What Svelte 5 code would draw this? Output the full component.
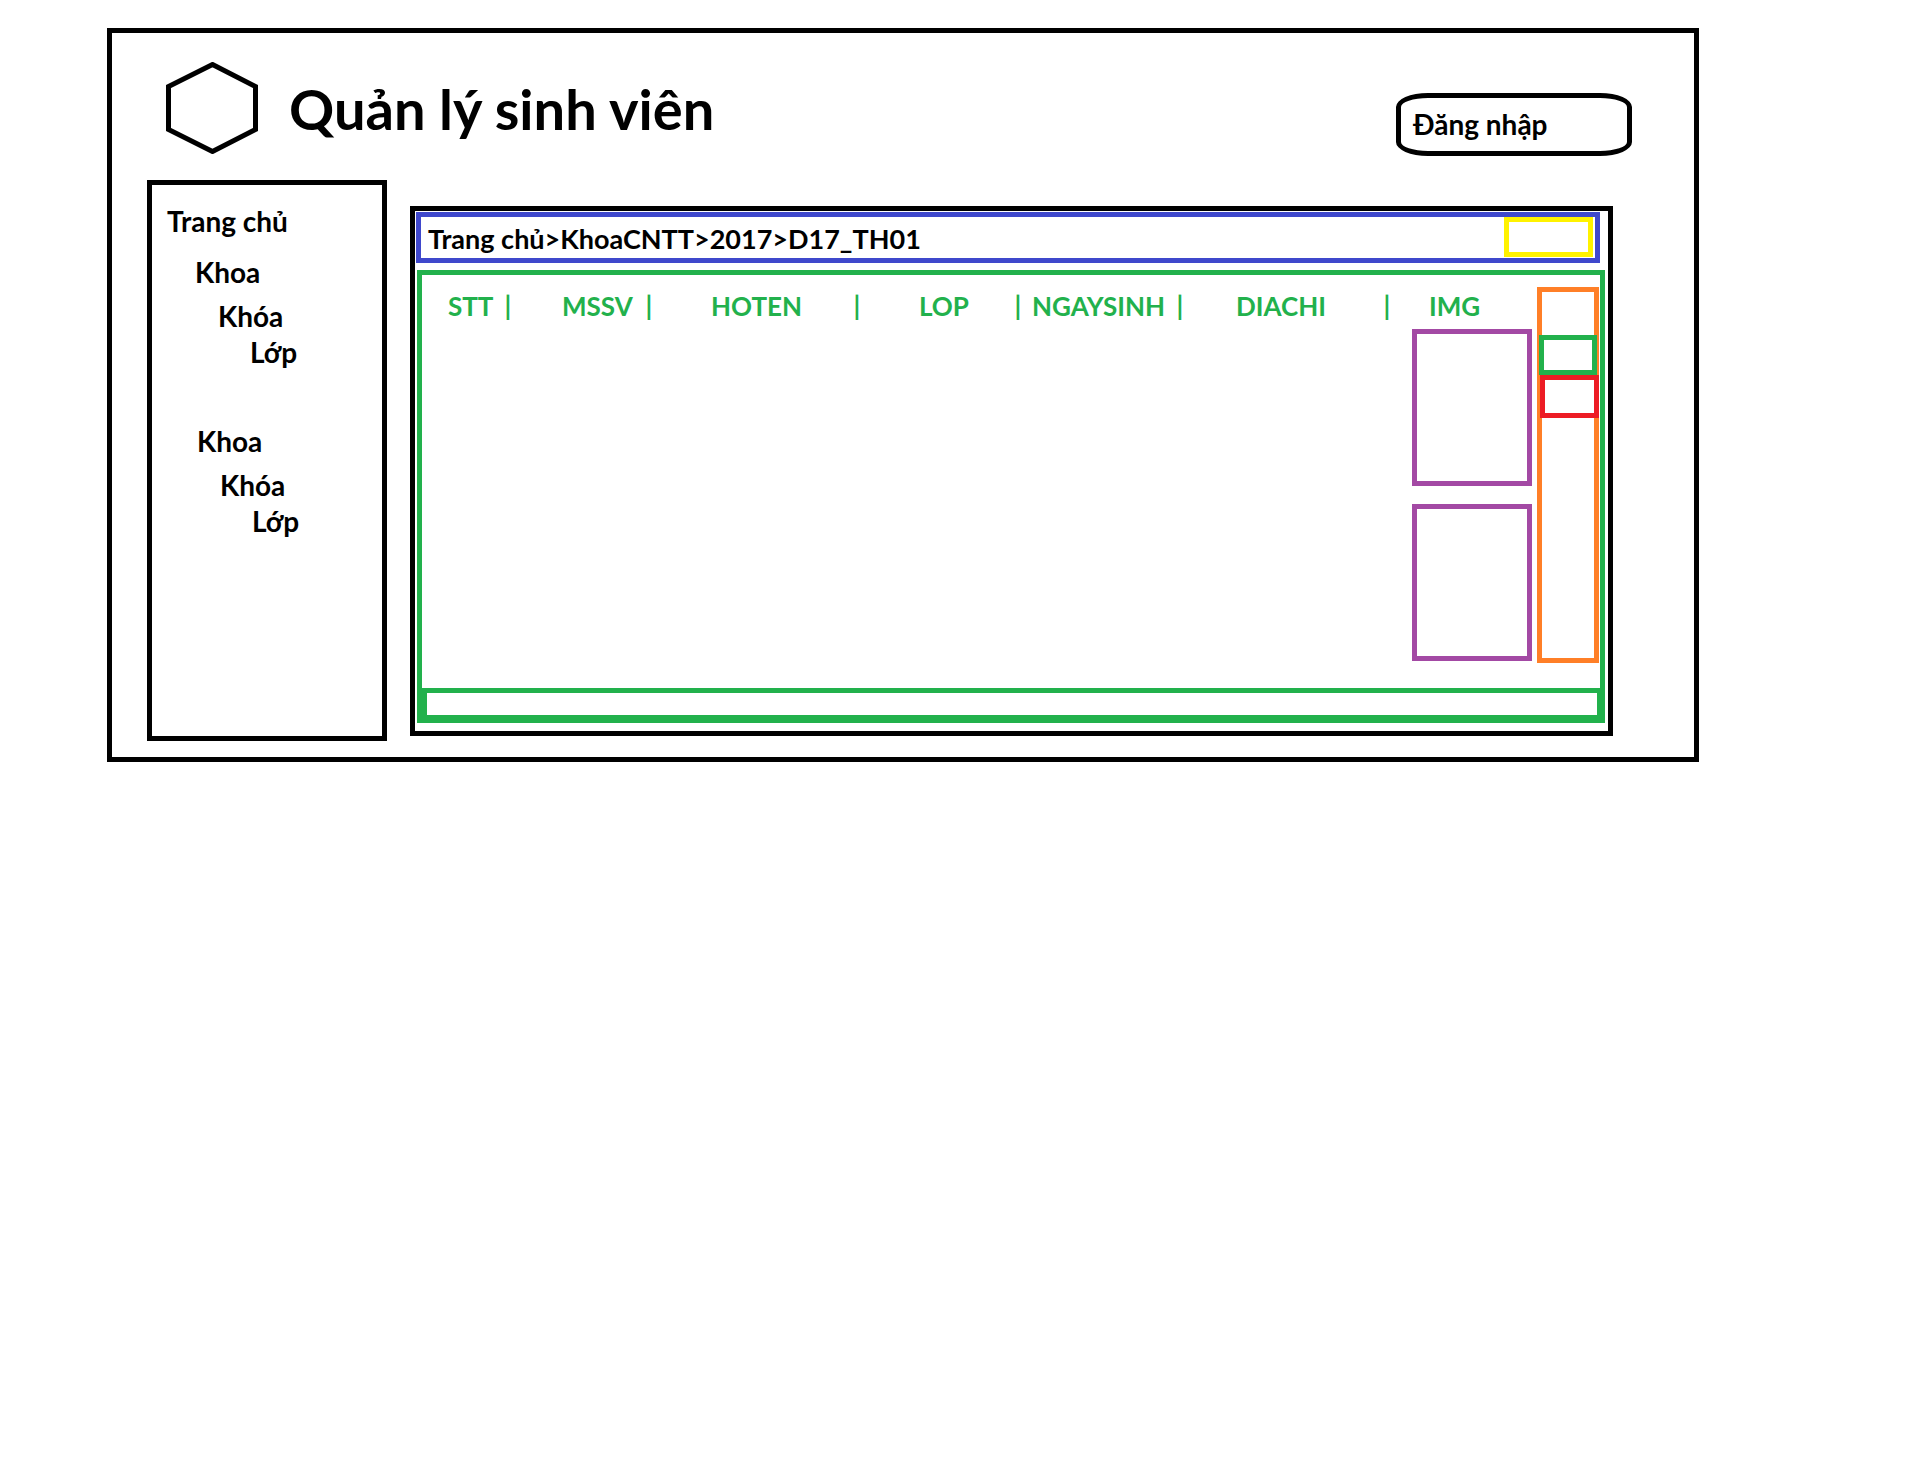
<script>
  const groups = [
    { faculty: 'Khoa', year: 'Khóa', className: 'Lớp' },
    { faculty: 'Khoa', year: 'Khóa', className: 'Lớp' }
  ];
  const crumbs = ['Trang chủ', 'KhoaCNTT', '2017', 'D17_TH01'];
  const columns = ['STT', 'MSSV', 'HOTEN', 'LOP', 'NGAYSINH', 'DIACHI', 'IMG'];
  const students = [1, 2];
</script>

<div class="page">
  <header>
    <svg class="logo" width="92" height="92" viewBox="0 0 92 92" aria-hidden="true">
      <path d="M46.5 2.5 89.5 24.5V67.5L46.5 89.5 2.5 67.5V24.5Z" />
    </svg>
    <h1>Quản lý sinh viên</h1>
    <button class="login" type="button">Đăng nhập</button>
  </header>

  <div class="body">
    <nav class="sidebar" aria-label="Danh mục">
      <a href="#home">Trang chủ</a>
      {#each groups as group}
        <ul class="faculty">
          <li>
            <a href="#faculty">{group.faculty}</a>
            <ul class="year">
              <li>
                <a href="#year">{group.year}</a>
                <ul class="class">
                  <li><a href="#class">{group.className}</a></li>
                </ul>
              </li>
            </ul>
          </li>
        </ul>
      {/each}
    </nav>

    <main>
      <div class="toolbar">
        <nav class="crumbs" aria-label="Đường dẫn">
          {#each crumbs as crumb, i}{#if i > 0}<span>&gt;</span>{/if}<a href="#path">{crumb}</a>{/each}
        </nav>
        <button class="add" type="button" aria-label="Thêm"></button>
      </div>

      <section class="list">
        <div class="records">
          <table>
            <thead>
              <tr>
                {#each columns as column, i}
                  <th class={column.toLowerCase()} scope="col">
                    <div class="head">
                      <span>{column}</span>
                      {#if i < columns.length - 1}<span class="bar">|</span>{/if}
                    </div>
                  </th>
                {/each}
              </tr>
            </thead>
            <tbody>
              {#each students as student (student)}
                <tr>
                  <td colspan="6"></td>
                  <td class="photo-cell"><div class="photo"></div></td>
                </tr>
              {/each}
            </tbody>
          </table>
          <div class="actions">
            <button class="edit" type="button" aria-label="Sửa"></button>
            <button class="delete" type="button" aria-label="Xóa"></button>
          </div>
        </div>
        <div class="pager"></div>
      </section>
    </main>
  </div>
</div>

<style>
  :global(body) {
    background: #fff;
  }
  .page, .page * {
    box-sizing: border-box;
  }
  .page {
    margin: 28px 223px 0 107px;
    border: 5px solid #000;
    color: #000;
    font: bold 28px/36px Lato, "Open Sans", sans-serif;
  }
  a {
    color: inherit;
    text-decoration: none;
  }
  button {
    padding: 0;
    background: #fff;
    color: inherit;
    font: inherit;
    text-align: left;
  }
  ul {
    margin: 0;
    padding: 0;
    list-style: none;
  }

  header {
    display: flex;
    align-items: flex-start;
    min-height: 147px;
    padding: 29px 62px 0 54px;
  }
  .logo {
    flex: none;
    fill: none;
    stroke: #000;
    stroke-width: 5;
  }
  h1 {
    margin: 17px 0 0 31px;
    font-size: 56px;
    line-height: 60px;
  }
  .login {
    width: 236px;
    margin: 31px 0 0 auto;
    padding: 8px 12px 9px;
    border: 5px solid #000;
    border-radius: 32px / 14px;
  }

  .body {
    display: flex;
    gap: 23px;
    padding: 0 81px 16px 35px;
  }
  .sidebar {
    flex: none;
    width: 240px;
    padding: 18px 15px;
    border: 5px solid #000;
  }
  .sidebar a {
    display: block;
  }
  .faculty {
    margin-top: 15px;
    padding-left: 28px;
  }
  .faculty + .faculty {
    margin-top: 53px;
    padding-left: 30px;
  }
  .year {
    margin-top: 8px;
    padding-left: 23px;
  }
  .class {
    padding-left: 32px;
  }

  main {
    flex: 1;
    min-width: 0;
    margin: 26px 0 5px;
    padding: 1px 3px 8px 1px;
    border: 5px solid #000;
  }
  .toolbar {
    display: flex;
    justify-content: space-between;
    margin-right: 5px;
    padding: 0 2px 1px 7px;
    border: 5px solid #3f48cc;
  }
  .crumbs {
    padding-top: 4px;
    font-size: 27px;
  }
  .add {
    width: 89px;
    height: 40px;
    border: 5px solid #fff200;
  }

  .list {
    margin: 7px 0 0 1px;
    border: 5px solid #22b14c;
  }
  .records {
    display: grid;
    grid-template-columns: 1fr 62px;
    gap: 5px;
    padding: 0 1px 9px 0;
  }
  table {
    width: 100%;
    table-layout: fixed;
    border-collapse: collapse;
    color: #22b14c;
    font-size: 26px;
  }
  th {
    padding: 13px 0 5px;
    text-align: left;
  }
  .head {
    display: flex;
    justify-content: space-between;
  }
  .bar {
    width: 8px;
    display: flex;
    justify-content: center;
  }
  .stt { width: 90px; padding-left: 26px; }
  .mssv { width: 141px; padding-left: 50px; }
  .hoten { width: 208px; padding-left: 58px; }
  .lop { width: 161px; padding-left: 58px; }
  .ngaysinh { width: 162px; padding-left: 10px; }
  .diachi { padding-left: 52px; }
  .img { width: 141px; padding-left: 38px; }
  td {
    padding: 0 0 18px;
  }
  .photo-cell {
    padding-left: 21px;
  }
  .photo {
    height: 157px;
    border: 5px solid #a349a4;
  }
  .actions {
    display: flex;
    flex-direction: column;
    height: 376px;
    margin-top: 12px;
    padding-top: 43px;
    border: 5px solid #ff7f27;
  }
  .edit {
    width: 58px;
    height: 40px;
    margin-left: -3px;
    border: 5px solid #22b14c;
  }
  .delete {
    width: 59px;
    height: 43px;
    margin-left: -2px;
    border: 5px solid #ed1c24;
  }
  .pager {
    height: 30px;
    border: solid #22b14c;
    border-width: 5px 3px 3px 5px;
  }
</style>
